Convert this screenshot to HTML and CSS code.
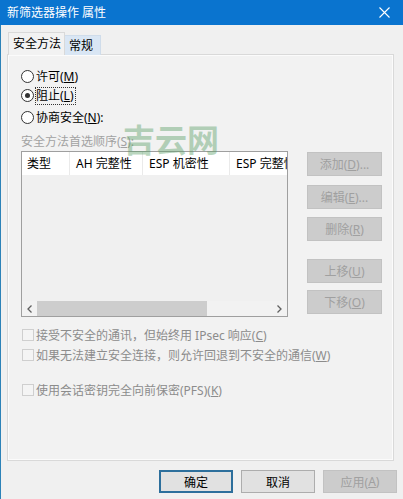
FILE: index.html
```html
<!doctype html>
<html lang="zh-CN">
<head>
    <meta charset="UTF-8">
    <title>新筛选器操作 属性</title>
    <link rel="stylesheet" href="styles.css">
</head>
<body>
<div class="window">
    <div class="titlebar">
        <span class="titlebar__text">新筛选器操作 属性</span>
        <svg class="titlebar__close" width="11" height="11" viewBox="0 0 11 11">
            <path d="M0.5 0.5L10.5 10.5M10.5 0.5L0.5 10.5" stroke="#fff" stroke-width="1.1" fill="none"/>
        </svg>
    </div>

    <div class="window__body">
        <div class="tabs">
            <div class="tabs__tab tabs__tab_active">安全方法</div>
            <div class="tabs__tab tabs__tab_hover">常规</div>
        </div>

        <div class="panel">
            <div class="radio radio_first"><span class="radio__mark"></span>许可(<u>M</u>)</div>
            <div class="radio"><span class="radio__mark radio__mark_checked"></span><span class="radio__focus">阻止(<u>L</u>)</span></div>
            <div class="radio radio_third"><span class="radio__mark"></span>协商安全(<u>N</u>):</div>
            <div class="panel__label">安全方法首选顺序(<u>S</u>):</div>

            <div class="methods">
                <div class="listview">
                    <div class="listview__header">
                        <div class="listview__col listview__col_type">类型</div>
                        <div class="listview__col listview__col_ah">AH 完整性</div>
                        <div class="listview__col listview__col_esp">ESP 机密性</div>
                        <div class="listview__col listview__col_last">ESP 完整性</div>
                    </div>
                    <div class="listview__body"></div>
                    <div class="scrollbar">
                        <div class="scrollbar__arrow">
                            <svg width="5" height="8" viewBox="0 0 5 8"><path d="M4.5 0.5L1 4L4.5 7.5" stroke="#606060" stroke-width="1.3" fill="none"/></svg>
                        </div>
                        <div class="scrollbar__track"><div class="scrollbar__thumb"></div></div>
                        <div class="scrollbar__arrow">
                            <svg width="5" height="8" viewBox="0 0 5 8"><path d="M0.5 0.5L4 4L0.5 7.5" stroke="#606060" stroke-width="1.3" fill="none"/></svg>
                        </div>
                    </div>
                </div>

                <div class="side-buttons">
                    <div class="btn btn_disabled">添加(<u>D</u>)...</div>
                    <div class="btn btn_disabled side-buttons__edit">编辑(<u>E</u>)...</div>
                    <div class="btn btn_disabled side-buttons__del">删除(<u>R</u>)</div>
                    <div class="btn btn_disabled side-buttons__up">上移(<u>U</u>)</div>
                    <div class="btn btn_disabled side-buttons__down">下移(<u>O</u>)</div>
                </div>
            </div>

            <div class="check check_first"><span class="check__box"></span>接受不安全的通讯，但始终用 IPsec 响应(<u>C</u>)</div>
            <div class="check"><span class="check__box"></span>如果无法建立安全连接，则允许回退到不安全的通信(<u>W</u>)</div>
            <div class="check check_third"><span class="check__box"></span>使用会话密钥完全向前保密(PFS)(<u>K</u>)</div>

            <div class="watermark">吉云网</div>
        </div>

        <div class="footer">
            <div class="btn btn_default">确定</div>
            <div class="btn">取消</div>
            <div class="btn btn_disabled">应用(<u>A</u>)</div>
        </div>
    </div>
</div>
</body>
</html>
```

FILE: styles.css
```css
html, body {
    margin: 0;
    padding: 0;
}

body {
    width: 403px;
    height: 499px;
    overflow: hidden;
    background: #f0f0f0;
    font-family: "Noto Sans", "Noto Sans CJK SC", sans-serif;
    font-size: 12px;
    color: #000;
}

.window {
    display: flex;
    flex-direction: column;
    height: 499px;
}

.titlebar {
    height: 25px;
    background: #0a74cf;
    display: flex;
    align-items: center;
    justify-content: space-between;
    padding: 0 13px 0 7px;
    color: #fff;
}

.titlebar__text {
    font-size: 12px;
    line-height: 25px;
}

.window__body {
    flex: 1;
    border-left: 1px solid #2c82b8;
    padding: 8px 9px 0 6px;
}

/* tabs */
.tabs {
    display: flex;
    align-items: flex-end;
    height: 22px;
    position: relative;
    z-index: 1;
    margin-bottom: -1px;
}

.tabs__tab {
    height: 19px;
    line-height: 19px;
    padding: 0 5px;
    border: 1px solid #d9d9d9;
    border-bottom: none;
    background: #f0f0f0;
    white-space: nowrap;
}

.tabs__tab_active {
    height: 22px;
    line-height: 21px;
    padding: 0 3px 0 4px;
    background: #f2f2f2;
    margin-left: 1px;
}

.tabs__tab_hover {
    background: #d9e6f4;
    border-color: #cfdcea;
    border-left: none;
    padding: 0 7px 0 4px;
}

/* panel */
.panel {
    position: relative;
    height: 407px;
    box-sizing: border-box;
    border: 1px solid #d9d9d9;
    box-shadow: inset 1px 1px 0 #fbfbfb, inset -1px -1px 0 #fbfbfb;
    background: #f2f2f2;
    padding: 12px 0 0 13px;
}

.radio {
    display: flex;
    align-items: center;
    height: 19px;
    line-height: 19px;
}

.radio_third {
    margin-top: 3px;
}

.radio__mark {
    width: 11px;
    height: 11px;
    border: 1px solid #333;
    border-radius: 50%;
    background: #fff;
    margin-right: 2px;
    display: flex;
    align-items: center;
    justify-content: center;
}

.radio__mark_checked::after {
    content: "";
    width: 5px;
    height: 5px;
    border-radius: 50%;
    background: #333;
}

.radio__focus {
    outline: 1px dotted #333;
    line-height: 16px;
    padding: 0 1px 0 0;
}

.panel__label {
    margin-top: 5px;
    height: 19px;
    line-height: 19px;
    color: #a2a2a2;
}

.methods {
    display: flex;
    align-items: flex-start;
}

/* list view */
.listview {
    width: 265px;
    height: 164px;
    border: 1px solid #9f9f9f;
    background: #f0f0f0;
    display: flex;
    flex-direction: column;
    overflow: hidden;
}

.listview__header {
    display: flex;
    height: 23px;
    background: #fff;
    flex-shrink: 0;
}

.listview__col {
    line-height: 23px;
    padding-left: 6px;
    border-right: 1px solid #eaeaea;
    white-space: nowrap;
    box-sizing: border-box;
    flex-shrink: 0;
}

.listview__col_type {
    width: 48px;
    padding-left: 5px;
}

.listview__col_ah {
    width: 73px;
}

.listview__col_esp {
    width: 87px;
}

.listview__col_last {
    width: 57px;
    overflow: hidden;
    border-right: none;
}

.listview__body {
    flex: 1;
}

.scrollbar {
    display: flex;
    height: 15px;
    background: #f2f2f2;
}

.scrollbar__arrow {
    width: 15px;
    display: flex;
    align-items: center;
    justify-content: center;
}

.scrollbar__track {
    flex: 1;
}

.scrollbar__thumb {
    width: 170px;
    height: 15px;
    background: #cdcdcd;
}

/* buttons */
.btn {
    width: 74px;
    height: 23px;
    box-sizing: border-box;
    border: 1px solid #adadad;
    background: #e1e1e1;
    display: flex;
    align-items: center;
    justify-content: center;
}

.btn_disabled {
    background: #cccccc;
    border-color: #c2c2c2;
    color: #a0a0a0;
}

.btn_default {
    border: 2px solid #2d6f9c;
}

.side-buttons {
    margin-left: 19px;
    padding-top: 1px;
    display: flex;
    flex-direction: column;
}

.side-buttons .btn {
    width: 75px;
    height: 24px;
}

.side-buttons__edit {
    margin-top: 9px;
}

.side-buttons__del {
    margin-top: 8px;
}

.side-buttons__up {
    margin-top: 18px;
}

.side-buttons__down {
    margin-top: 7px;
}

/* checkboxes */
.check {
    display: flex;
    align-items: center;
    height: 18px;
    margin-top: 2px;
    color: #8c8c8c;
    margin-left: 1px;
}

.check_first {
    margin-top: 9px;
}

.check_third {
    margin-top: 17px;
}

.check__box {
    width: 10px;
    height: 10px;
    border: 1px solid #cfcfcf;
    background: #f4f4f4;
    margin-right: 2px;
}

.watermark {
    position: absolute;
    left: 115px;
    top: 67px;
    font-family: "Noto Sans CJK SC", sans-serif;
    font-size: 32px;
    line-height: 32px;
    font-weight: 700;
    color: #5a9e66;
    opacity: 0.42;
}

/* footer */
.footer {
    display: flex;
    justify-content: flex-end;
    gap: 8px;
    margin-top: 9px;
    margin-right: -3px;
}
```
